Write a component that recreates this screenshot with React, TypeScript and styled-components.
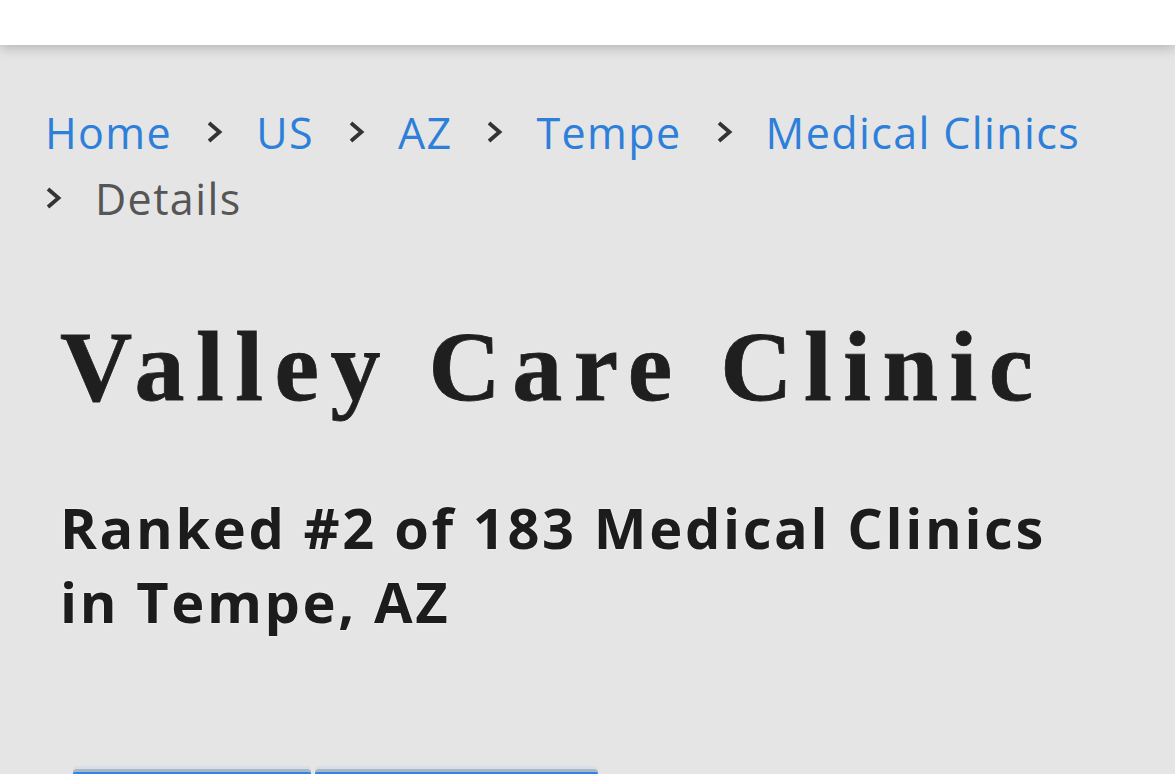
import React from "react";
import styled, { createGlobalStyle } from "styled-components";

const Global = createGlobalStyle`
  html, body { margin: 0; padding: 0; background: #e5e5e5; }
  body { font-family: "Open Sans", "Noto Sans", sans-serif; }
`;

const Page = styled.div`
  min-height: 774px;
  background: #e5e5e5;
`;

const TopBar = styled.header`
  height: 45px;
  background: #ffffff;
  box-shadow: 0 3px 12px rgba(0, 0, 0, 0.22);
  position: relative;
  z-index: 1;
`;

const Crumbs = styled.nav`
  display: flex;
  flex-wrap: wrap;
  column-gap: 34px;
  margin: 55px 0 0 45px;
  font-family: "Open Sans", "Noto Sans", sans-serif;
  font-weight: 500;
  font-size: 43px;
  line-height: 66px;
  letter-spacing: 1.4px;
  max-width: 1110px;
`;

const Crumb = styled.span`
  display: flex;
  align-items: center;
  gap: 33px;
`;

const CrumbLink = styled.a<{ $current?: boolean }>`
  color: ${(p) => (p.$current ? "#555555" : "#2d7fd9")};
  text-decoration: none;
`;

const Chevron = styled.svg`
  width: 17px;
  height: 24px;
  flex: none;
  margin-top: -2px;
`;

const Sep = () => (
  <Chevron viewBox="0 0 17 24">
    <path d="M3 3 L13.5 12 L3 21" fill="none" stroke="#333" strokeWidth="3.8" strokeLinejoin="miter" />
  </Chevron>
);

const Title = styled.h1`
  margin: 75px 0 0 60px;
  font-family: "Liberation Serif", "Times New Roman", serif;
  font-weight: 700;
  font-size: 100px;
  line-height: 120px;
  letter-spacing: 11.5px;
  color: #1f1f1f;
  -webkit-text-stroke: 0.8px #1f1f1f;
  text-shadow: 0 0 2px #ffffff;
`;

const Subtitle = styled.h2`
  margin: 63px 0 0 60px;
  max-width: 1010px;
  font-family: "Open Sans", "Noto Sans", sans-serif;
  font-weight: 700;
  font-size: 56px;
  line-height: 74px;
  letter-spacing: 2.6px;
  color: #1c1c1c;
  text-shadow: 0 0 2px #ffffff;
`;

const Actions = styled.div`
  display: flex;
  gap: 4px;
  margin: 131px 0 0 73px;
`;

const ActionButton = styled.button<{ $w: number }>`
  width: ${(p) => p.$w}px;
  height: 56px;
  background: #2f85e2;
  border: none;
  border-top: 3px solid #a9b6c6;
  border-radius: 4px 4px 0 0;
  box-shadow: 0 -3px 0 #d9dfe6;
  padding: 0;
`;

export default function App() {
  const trail = ["US", "AZ", "Tempe", "Medical Clinics"];
  return (
    <Page>
      <Global />
      <TopBar />
      <Crumbs>
        <Crumb>
          <CrumbLink href="#">Home</CrumbLink>
        </Crumb>
        {trail.map((t) => (
          <Crumb key={t}>
            <Sep />
            <CrumbLink href="#">{t}</CrumbLink>
          </Crumb>
        ))}
        <Crumb>
          <Sep />
          <CrumbLink $current>Details</CrumbLink>
        </Crumb>
      </Crumbs>
      <Title>Valley Care Clinic</Title>
      <Subtitle>Ranked #2 of 183 Medical Clinics in Tempe, AZ</Subtitle>
      <Actions>
        <ActionButton $w={238} aria-label="action" />
        <ActionButton $w={283} aria-label="action" />
      </Actions>
    </Page>
  );
}
